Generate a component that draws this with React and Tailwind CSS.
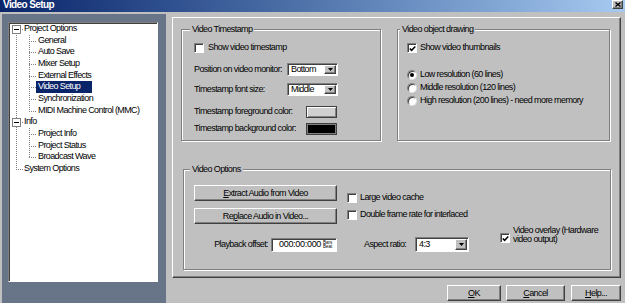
import React from 'react';

const sunken = "border border-t-[#808080] border-l-[#808080] border-r-white border-b-white shadow-[inset_1px_1px_0_#404040]";
const raised = "border border-t-white border-l-white border-r-[#404040] border-b-[#404040] shadow-[inset_-1px_-1px_0_#808080]";

function Check({ on }) {
  return (
    <span className={`w-[10px] h-[10px] shrink-0 bg-white flex items-center justify-center ${sunken}`}>
      {on && (
        <svg width="7" height="7" viewBox="0 0 7 7">
          <path d="M0.8 3.4 L2.6 5.3 L6.3 1.4" stroke="#000" strokeWidth="1.5" fill="none" />
        </svg>
      )}
    </span>
  );
}

function Radio({ on }) {
  return (
    <span className="w-[10px] h-[10px] shrink-0 rounded-full bg-white border border-t-[#808080] border-l-[#808080] border-r-[#e0e0e0] border-b-[#e0e0e0] shadow-[inset_1px_1px_0_#404040] flex items-center justify-center">
      {on && <span className="w-[4px] h-[4px] rounded-full bg-black" />}
    </span>
  );
}

function Select({ value, className }) {
  return (
    <div className={`bg-white flex items-stretch p-[1px] ${sunken} ${className}`}>
      <span className="flex-1 flex items-center pl-[2px] leading-none">{value}</span>
      <span className={`w-[12px] bg-[#c0c0c0] flex items-center justify-center ${raised}`}>
        <svg width="5" height="3" viewBox="0 0 5 3"><path d="M0 0H5L2.5 3Z" fill="#000" /></svg>
      </span>
    </div>
  );
}

function Btn({ children, className }) {
  return (
    <div className={`bg-[#c0c0c0] flex items-center justify-center leading-none ${raised} ${className}`}>
      {children}
    </div>
  );
}

function Group({ title, className, legendClass, children }) {
  return (
    <fieldset className={`border border-[#808080] shadow-[inset_1px_1px_0_#fff,1px_1px_0_#fff] ${className}`}>
      <legend className={`px-[2px] leading-[11px] bg-[#c0c0c0] relative ${legendClass}`}>{title}</legend>
      {children}
    </fieldset>
  );
}

const tree = [
  { t: 'Project Options', lvl: 0, box: true },
  { t: 'General', lvl: 1 },
  { t: 'Auto Save', lvl: 1 },
  { t: 'Mixer Setup', lvl: 1 },
  { t: 'External Effects', lvl: 1 },
  { t: 'Video Setup', lvl: 1, sel: true },
  { t: 'Synchronization', lvl: 1 },
  { t: 'MIDI Machine Control (MMC)', lvl: 1 },
  { t: 'Info', lvl: 0, box: true },
  { t: 'Project Info', lvl: 1 },
  { t: 'Project Status', lvl: 1 },
  { t: 'Broadcast Wave', lvl: 1 },
  { t: 'System Options', lvl: 0 },
];

const RH = 11.67;
const cy = (i) => 5.83 + RH * i;

function TreeLines() {
  const dot = { stroke: '#808080', strokeWidth: 1, strokeDasharray: '1 1' };
  return (
    <svg className="absolute left-0 top-0" width="148" height="170" shapeRendering="crispEdges">
      <line x1="7.5" y1={cy(0)} x2="7.5" y2={cy(12)} {...dot} />
      <line x1="20.5" y1={cy(0) + 6} x2="20.5" y2={cy(7)} {...dot} />
      <line x1="20.5" y1={cy(8) + 6} x2="20.5" y2={cy(11)} {...dot} />
      {tree.map((r, i) =>
        r.lvl === 1 ? (
          <line key={i} x1="20" y1={Math.round(cy(i)) + 0.5} x2="27" y2={Math.round(cy(i)) + 0.5} {...dot} />
        ) : (
          <line key={i} x1={r.box ? 11 : 7} y1={Math.round(cy(i)) + 0.5} x2="14" y2={Math.round(cy(i)) + 0.5} {...dot} />
        )
      )}
      {[0, 8].map((i) => (
        <g key={i}>
          <rect x="3.5" y={Math.round(cy(i)) - 3.5} width="8" height="8" fill="#fff" stroke="#808080" />
          <line x1="5" y1={Math.round(cy(i)) + 0.5} x2="10" y2={Math.round(cy(i)) + 0.5} stroke="#000" />
        </g>
      ))}
    </svg>
  );
}

export default function App() {
  return (
    <div className="w-[625px] h-[303px] overflow-hidden bg-[#c0c0c0] flex flex-col font-['Liberation_Sans',Arial,sans-serif] text-[9px] tracking-[-0.6px] text-black">
      {/* title bar */}
      <div className="h-[12px] shrink-0 bg-gradient-to-r from-[#0a246a] to-[#a6caf0] flex items-start justify-between pl-[3px] pr-[2px]">
        <span className="text-white font-bold text-[10px] leading-[10px]">Video Setup</span>
        <span className={`w-[11px] h-[9px] bg-[#c0c0c0] flex items-center justify-center ${raised}`}>
          <svg width="6" height="5" viewBox="0 0 6 5"><path d="M0.5 0.5L5.5 4.5M5.5 0.5L0.5 4.5" stroke="#000" strokeWidth="1.4" /></svg>
        </span>
      </div>

      <div className="flex flex-1 pt-[2px]">
        {/* left tree pane */}
        <div className="w-[164px] ml-[2px] bg-[#687488] pt-[8px] pl-[6px]">
          <div className={`w-[150px] h-[260px] bg-white relative ${sunken}`}>
            <TreeLines />
            <div className="relative flex flex-col">
              {tree.map((r, i) => (
                <div key={i} className={`h-[11.67px] leading-[11.67px] whitespace-nowrap ${r.lvl === 0 ? 'pl-[15px]' : r.sel ? 'pl-[27px]' : 'pl-[29px]'}`}>
                  {r.sel ? <span className="inline-block w-[56px] pl-[2px] bg-[#0a246a] text-white">{r.t}</span> : r.t}
                </div>
              ))}
            </div>
          </div>
        </div>

        {/* right side */}
        <div className="flex-1 flex flex-col pl-[6px] pt-[3px]">
          <div className={`w-[449px] h-[261px] flex flex-col pl-[8px] pt-[6px] ${raised}`}>
            <div className="flex">
              <Group title="Video Timestamp" className="w-[200px] h-[117px] pl-[12px]" legendClass="ml-[-4px]">
                <div className="flex flex-col">
                  <div className="mt-[8px] h-[10px] flex items-center gap-[4px]">
                    <Check />
                    <span>Show video timestamp</span>
                  </div>
                  <div className="mt-[10px] h-[13px] flex items-center">
                    <span className="w-[93px]">Position on video monitor:</span>
                    <Select value="Bottom" className="w-[51px] h-[13px]" />
                  </div>
                  <div className="mt-[7px] h-[13px] flex items-center">
                    <span className="w-[93px]">Timestamp font size:</span>
                    <Select value="Middle" className="w-[51px] h-[13px]" />
                  </div>
                  <div className="mt-[10px] h-[12px] flex items-center">
                    <span className="w-[112px]">Timestamp foreground color:</span>
                    <span className="w-[31px] h-[12px] bg-[#d0d0d0] border border-[#404040] shadow-[inset_1px_1px_0_#fff,inset_-1px_-1px_0_#808080]" />
                  </div>
                  <div className="mt-[5px] h-[12px] flex items-center">
                    <span className="w-[112px]">Timestamp background color:</span>
                    <span className="w-[31px] h-[12px] bg-black border border-[#404040] shadow-[inset_1px_1px_0_#808080,inset_-1px_-1px_0_#808080]" />
                  </div>
                </div>
              </Group>

              <Group title="Video object drawing" className="ml-[16px] w-[213px] h-[117px] pl-[9px]" legendClass="ml-[-7px]">
                <div className="flex flex-col">
                  <div className="mt-[8px] h-[10px] flex items-center gap-[3px]">
                    <Check on />
                    <span>Show video thumbnails</span>
                  </div>
                  <div className="mt-[17px] h-[10px] flex items-center gap-[3px]">
                    <Radio on />
                    <span>Low resolution (60 lines)</span>
                  </div>
                  <div className="mt-[3px] h-[10px] flex items-center gap-[3px]">
                    <Radio />
                    <span>Middle resolution (120 lines)</span>
                  </div>
                  <div className="mt-[3px] h-[10px] flex items-center gap-[3px]">
                    <Radio />
                    <span>High resolution (200 lines) - need more memory</span>
                  </div>
                </div>
              </Group>
            </div>

            <Group title="Video Options" className="mt-[23px] ml-[2px] w-[428px] h-[106px] pl-[10px]" legendClass="ml-[-4px]">
              <div className="flex flex-col">
                <div className="mt-[10px] h-[16px] flex items-start">
                  <Btn className="w-[143px] h-[16px]"><span><u>E</u>xtract Audio from Video</span></Btn>
                  <div className="ml-[10px] mt-[6px] flex items-center gap-[3px]">
                    <Check />
                    <span>Large video cache</span>
                  </div>
                </div>
                <div className="mt-[7px] h-[16px] flex items-start">
                  <Btn className="w-[143px] h-[16px]"><span>Re<u>p</u>lace Audio in Video...</span></Btn>
                  <div className="ml-[10px] flex items-center gap-[3px]">
                    <Check />
                    <span>Double frame rate for interlaced</span>
                  </div>
                </div>
                <div className="mt-[2px] h-[26px] flex items-start">
                  <span className="w-[74px] h-[14px] mt-[12px] flex items-center justify-end">Playback offset:</span>
                  <div className={`ml-[3px] mt-[12px] w-[66px] h-[14px] bg-white flex items-center pl-[7px] ${sunken}`}>
                    <span className="tracking-[-0.3px]">000:00:000</span>
                    <span className="ml-[2px] flex flex-col text-[4.5px] leading-[4.5px] tracking-normal">
                      <span>Bars</span>
                      <span>Beat</span>
                    </span>
                  </div>
                  <span className="ml-[27px] w-[51px] h-[15px] mt-[11px] flex items-center">Aspect ratio:</span>
                  <Select value="4:3" className="mt-[11px] w-[54px] h-[15px]" />
                  <div className="ml-[31px] flex items-start gap-[3px]">
                    <span className="mt-[7px]"><Check on /></span>
                    <span className="leading-[9px]">Video overlay (Hardware<br />video output)</span>
                  </div>
                </div>
              </div>
            </Group>
          </div>

          <div className="mt-[7px] flex justify-end pr-[4px]">
            <Btn className="w-[54px] h-[16px]"><span><u>O</u>K</span></Btn>
            <Btn className="ml-[5px] w-[59px] h-[16px]"><span><u>C</u>ancel</span></Btn>
            <Btn className="ml-[6px] w-[50px] h-[16px]"><span><u>H</u>elp...</span></Btn>
          </div>
        </div>
      </div>
    </div>
  );
}
